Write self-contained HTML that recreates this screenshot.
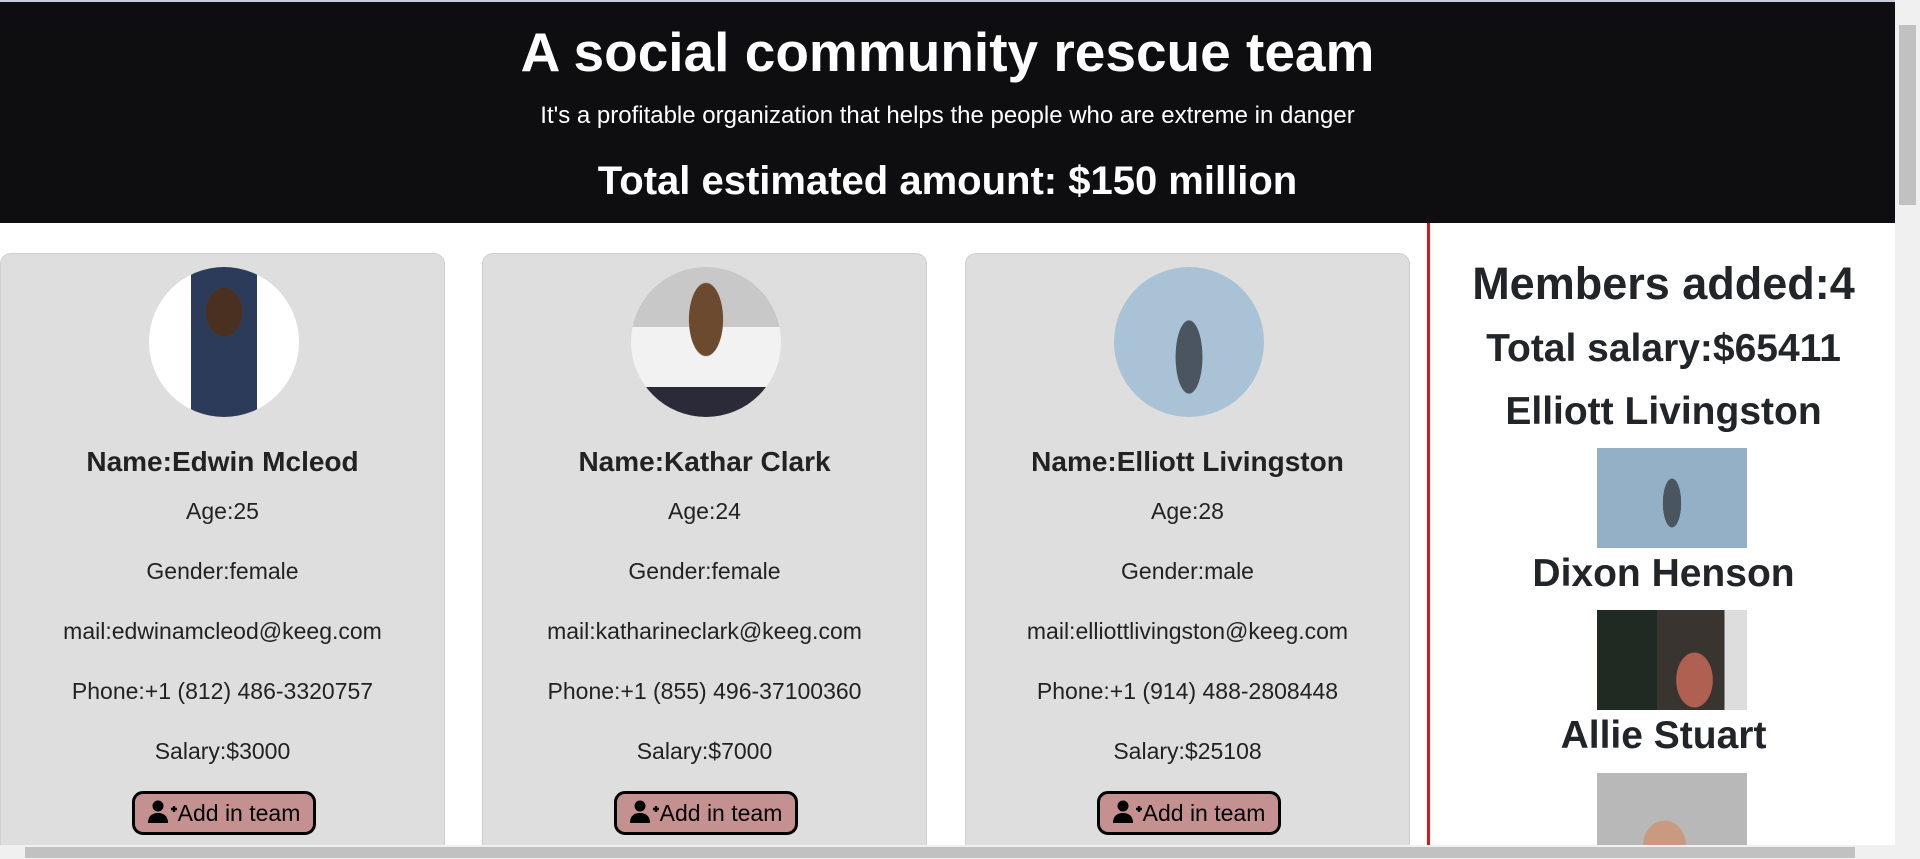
<!DOCTYPE html>
<html><head><meta charset="utf-8"><style>
*{box-sizing:border-box;margin:0;padding:0}
html,body{width:1920px;height:859px;overflow:hidden}
body{background:#fff;font-family:"Liberation Sans",sans-serif;color:#212529;position:relative}
.top{position:absolute;left:0;top:0;width:1895px;height:223px;background:#0e0d10;border-top:2px solid #c8ccd8;color:#fff;text-align:center}
.top h1{position:absolute;top:18px;width:100%;font-size:55px;font-weight:bold}
.top p{position:absolute;top:100px;width:100%;font-size:24px}
.top h2{position:absolute;top:157px;width:100%;font-size:40px;font-weight:bold}
.card{position:absolute;top:253px;width:445px;height:592px;background:#dedede;border:1px solid #cfcfcf;border-bottom:none;border-radius:11px 11px 0 0;text-align:center;overflow:hidden}
.av{position:absolute;left:148px;top:13px;width:150px;height:150px;border-radius:50%;overflow:hidden}
.card .nm{position:absolute;top:192px;width:100%;font-size:28px;font-weight:bold;color:#222}
.card .l{position:absolute;width:100%;font-size:23px;color:#222}
.btn{position:absolute;left:131px;top:537px;width:184px;height:44px;background:#c49090;border:3px solid #000;border-radius:11px;font-size:23px;color:#000;line-height:38px;text-align:center;white-space:nowrap}
.btn svg{vertical-align:-3px}
.red{position:absolute;left:1427px;top:223px;width:3px;height:622px;background:#d41919}
.rt{position:absolute;left:1432px;width:463px;text-align:center;color:#212529;font-weight:bold}
.pic{position:absolute;left:1597px;width:150px;height:100px}
.vs{position:absolute;left:1895px;top:0;width:25px;height:845px;background:#f0f0f0}
.hs{position:absolute;left:0;top:845px;width:1920px;height:14px;background:#f0f0f0}
</style></head><body>
<div class="top">
<h1>A social community rescue team</h1>
<p>It's a profitable organization that helps the people who are extreme in danger</p>
<h2>Total estimated amount: $150 million</h2>
</div>

<div class="card" style="left:0">
<div class="av" style="background:radial-gradient(ellipse 30px 40px at 50% 30%,#4a3020 0 60%,transparent 62%),linear-gradient(90deg,#fff 0 28%,#2d3b5a 28% 72%,#fff 72%);"></div>
<div class="nm">Name:Edwin Mcleod</div>
<div class="l" style="top:244px">Age:25</div>
<div class="l" style="top:304px">Gender:female</div>
<div class="l" style="top:364px">mail:edwinamcleod@keeg.com</div>
<div class="l" style="top:424px">Phone:+1 (812) 486-3320757</div>
<div class="l" style="top:484px">Salary:$3000</div>
<div class="btn"><svg width="30" height="24" viewBox="0 0 30 24"><circle cx="10" cy="6" r="5.5"/><path d="M0 23c0-7 4-10 10-10s10 3 10 10z"/><path d="M23 9h6M26 6v6" stroke="#000" stroke-width="2.4"/></svg>Add in team</div>
</div>

<div class="card" style="left:482px">
<div class="av" style="background:radial-gradient(ellipse 28px 60px at 50% 35%,#6b4a30 0 60%,transparent 62%),linear-gradient(180deg,#c8c8c8 0 40%,#f2f2f2 40% 80%,#2a2a38 80%);"></div>
<div class="nm">Name:Kathar Clark</div>
<div class="l" style="top:244px">Age:24</div>
<div class="l" style="top:304px">Gender:female</div>
<div class="l" style="top:364px">mail:katharineclark@keeg.com</div>
<div class="l" style="top:424px">Phone:+1 (855) 496-37100360</div>
<div class="l" style="top:484px">Salary:$7000</div>
<div class="btn"><svg width="30" height="24" viewBox="0 0 30 24"><circle cx="10" cy="6" r="5.5"/><path d="M0 23c0-7 4-10 10-10s10 3 10 10z"/><path d="M23 9h6M26 6v6" stroke="#000" stroke-width="2.4"/></svg>Add in team</div>
</div>

<div class="card" style="left:965px">
<div class="av" style="background:radial-gradient(ellipse 22px 60px at 50% 60%,#4b5560 0 60%,transparent 62%),#a9c2d6;"></div>
<div class="nm">Name:Elliott Livingston</div>
<div class="l" style="top:244px">Age:28</div>
<div class="l" style="top:304px">Gender:male</div>
<div class="l" style="top:364px">mail:elliottlivingston@keeg.com</div>
<div class="l" style="top:424px">Phone:+1 (914) 488-2808448</div>
<div class="l" style="top:484px">Salary:$25108</div>
<div class="btn"><svg width="30" height="24" viewBox="0 0 30 24"><circle cx="10" cy="6" r="5.5"/><path d="M0 23c0-7 4-10 10-10s10 3 10 10z"/><path d="M23 9h6M26 6v6" stroke="#000" stroke-width="2.4"/></svg>Add in team</div>
</div>

<div class="red"></div>
<div class="rt" style="top:258px;font-size:45px">Members added:4</div>
<div class="rt" style="top:327px;font-size:39px">Total salary:$65411</div>
<div class="rt" style="top:390px;font-size:39px">Elliott Livingston</div>
<div class="pic" style="top:448px;background:radial-gradient(ellipse 15px 40px at 50% 55%,#4b5560 0 60%,transparent 62%),#93b0c6"></div>
<div class="rt" style="top:552px;font-size:39px">Dixon Henson</div>
<div class="pic" style="top:610px;background:radial-gradient(ellipse 30px 45px at 65% 70%,#b06050 0 60%,transparent 62%),linear-gradient(90deg,#1f2a22 0 40%,#3a3430 40% 85%,#ddd 85%)"></div>
<div class="rt" style="top:714px;font-size:39px">Allie Stuart</div>
<div class="pic" style="top:773px;height:72px;background:radial-gradient(ellipse 35px 40px at 45% 100%,#c99a80 0 60%,transparent 62%),#b8b8b8"></div>

<div class="vs"><div style="position:absolute;left:4px;top:25px;width:17px;height:180px;background:#c1c1c1"></div></div>
<div class="hs"><div style="position:absolute;left:25px;top:2px;width:1830px;height:11px;background:#c1c1c1"></div></div>
</body></html>
